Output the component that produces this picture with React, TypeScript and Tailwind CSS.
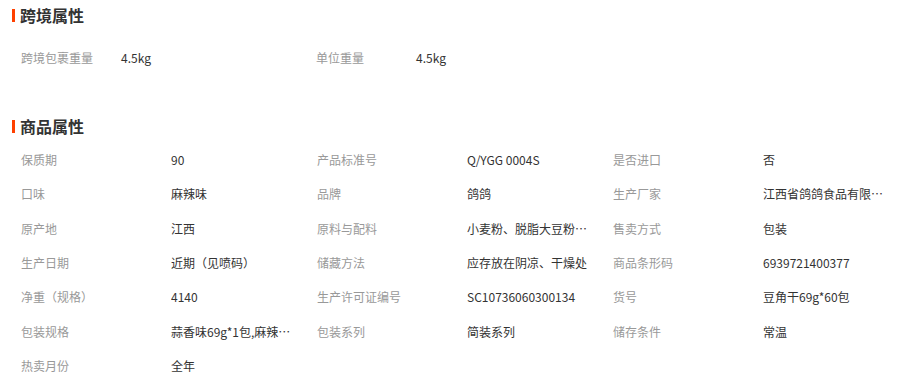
import React from "react";

type Attr = { label: string; value: string };

const crossBorder: Attr[] = [
  { label: "跨境包裹重量", value: "4.5kg" },
  { label: "单位重量", value: "4.5kg" },
];

const product: Attr[] = [
  { label: "保质期", value: "90" },
  { label: "产品标准号", value: "Q/YGG 0004S" },
  { label: "是否进口", value: "否" },
  { label: "口味", value: "麻辣味" },
  { label: "品牌", value: "鸽鸽" },
  { label: "生产厂家", value: "江西省鸽鸽食品有限公司" },
  { label: "原产地", value: "江西" },
  { label: "原料与配料", value: "小麦粉、脱脂大豆粉、食用植物油" },
  { label: "售卖方式", value: "包装" },
  { label: "生产日期", value: "近期（见喷码）" },
  { label: "储藏方法", value: "应存放在阴凉、干燥处" },
  { label: "商品条形码", value: "6939721400377" },
  { label: "净重（规格）", value: "4140" },
  { label: "生产许可证编号", value: "SC10736060300134" },
  { label: "货号", value: "豆角干69g*60包" },
  { label: "包装规格", value: "蒜香味69g*1包,麻辣味69g*1包" },
  { label: "包装系列", value: "简装系列" },
  { label: "储存条件", value: "常温" },
  { label: "热卖月份", value: "全年" },
];

const SectionTitle = ({ title }: { title: string }) => (
  <div className="flex items-center h-5">
    <span className="ml-[12px] w-[3px] h-[13px] bg-[#ff4000]" />
    <h3 className="ml-[5px] text-[16px] font-bold text-[#333]">{title}</h3>
  </div>
);

export default function App() {
  return (
    <div
      className="w-[898px] h-[373px] bg-white overflow-hidden text-[12px]"
      style={{ fontFamily: '"Noto Sans CJK SC", "Noto Sans", sans-serif' }}
    >
      <div className="pt-[5px]">
        <SectionTitle title="跨境属性" />
        <div className="mt-[16px] pl-[21px] grid grid-cols-[295px_295px]">
          {crossBorder.map((a) => (
            <div key={a.label} className="flex items-center h-[34px]">
              <span className="w-[100px] text-[#999]">{a.label}</span>
              <span className="text-[#333]">{a.value}</span>
            </div>
          ))}
        </div>
      </div>
      <div className="mt-[41px]">
        <SectionTitle title="商品属性" />
        <div className="mt-[7px] pl-[21px] grid grid-cols-[296px_296px_286px]">
          {product.map((a) => (
            <div key={a.label} className="flex items-center h-[34.3px]">
              <span className="w-[150px] shrink-0 text-[#999]">{a.label}</span>
              <span className="w-[122px] truncate text-[#333]">{a.value}</span>
            </div>
          ))}
        </div>
      </div>
    </div>
  );
}
